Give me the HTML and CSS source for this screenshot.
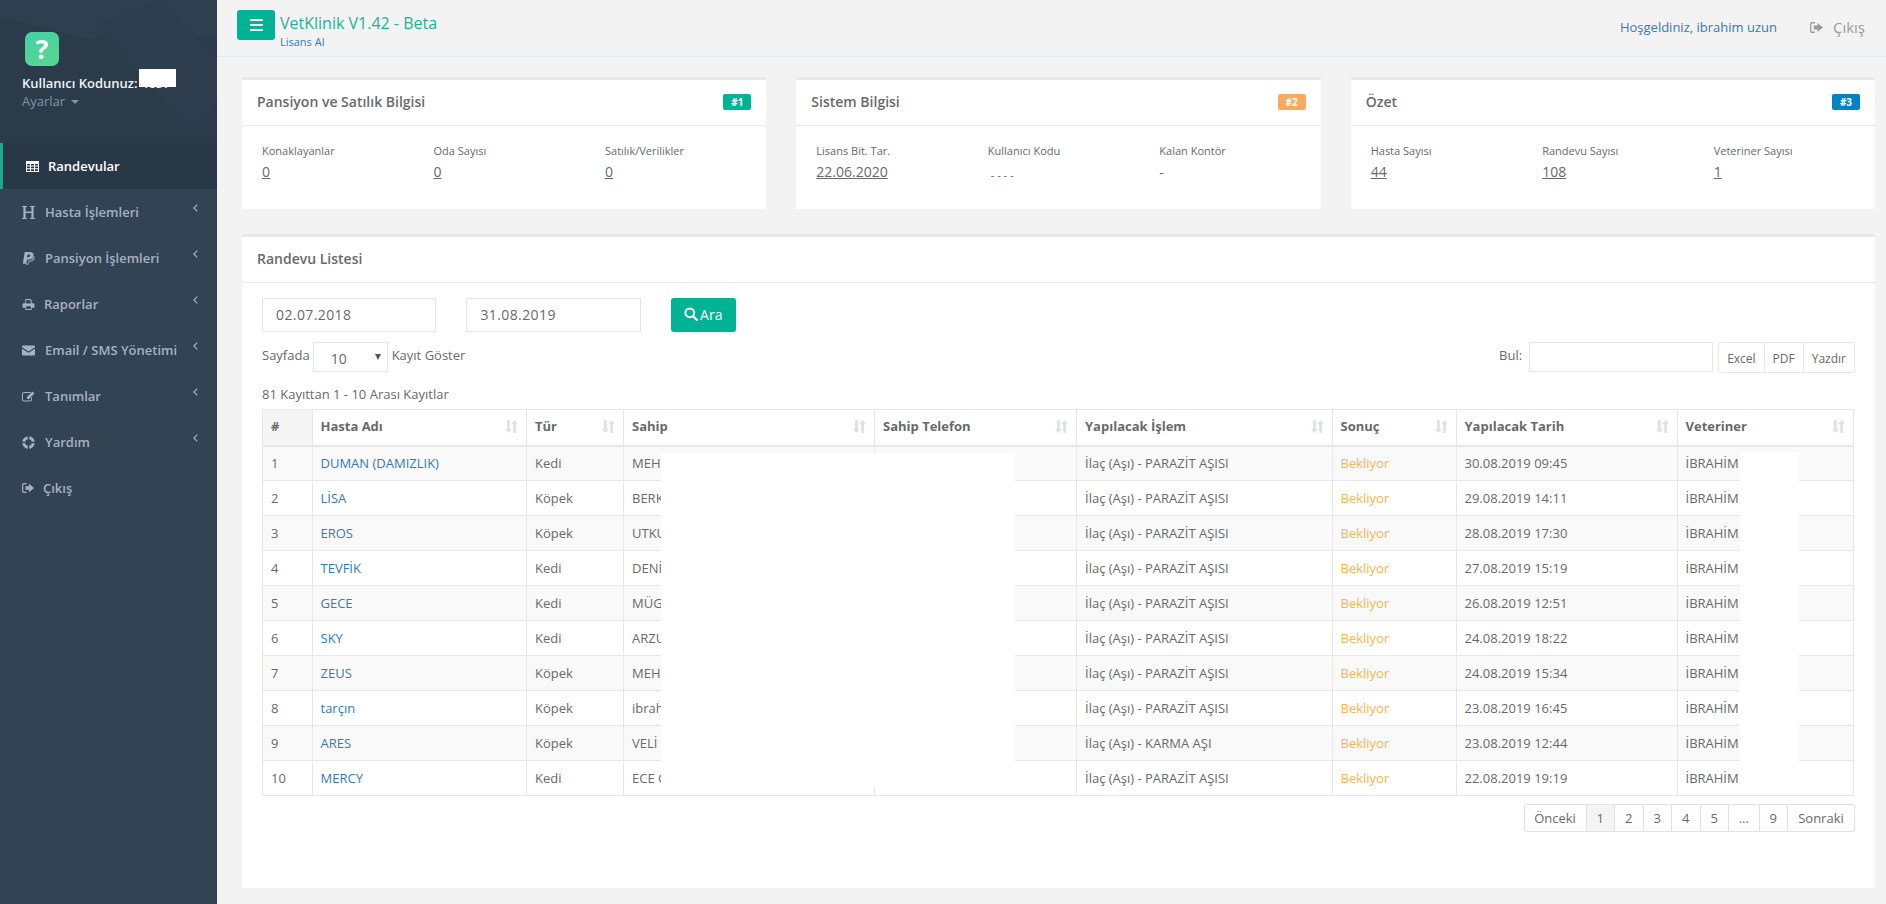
FILE: index.html
```html
<!DOCTYPE html>
<html lang="tr">
<head>
<meta charset="UTF-8" />
<meta name="viewport" content="width=device-width, initial-scale=1" />
<title>VetKlinik - Randevular</title>
<link rel="stylesheet" href="styles.css">
</head>
<body>

<svg class="icon-defs" width="0" height="0">
  <symbol id="i-table" viewBox="0 0 13 11"><path fill-rule="evenodd" d="M0 0h13v11H0zM1 3v1.6h3V3zm4 0v1.6h3V3zm4 0v1.6h3V3zM1 5.6v1.6h3V5.6zm4 0v1.6h3V5.6zm4 0v1.6h3V5.6zM1 8.2V10h3V8.2zm4 0V10h3V8.2zm4 0V10h3V8.2z"/></symbol>
  <symbol id="i-header" viewBox="0 0 13 13"><path d="M0 0h5v1H3.6v4.6h5.8V1H8V0h5v1h-1.4v11H13v1H8v-1h1.4V6.9H3.6V12H5v1H0v-1h1.4V1H0z"/></symbol>
  <symbol id="i-paypal" viewBox="0 0 13 13"><path opacity=".6" d="M10.600 3.200c1.700.6 2.600 1.700 2.300 3.400-.4 2.200-2.200 3.300-4.400 3.300H7.300L6.700 13H3.900l.3-1.800h1.400l.6-3h1.300c1.900 0 3.100-2.200 3.100-5z"/><path fill-rule="evenodd" d="M2.800 0h5.100c2.500 0 3.900 1.200 3.500 3.400-.4 2.700-2.400 4-5 4H5.100L4.200 11.700H.8zM5.500 2.400 4.900 5.200h1.200c1.200 0 2-.6 2.200-1.600.1-.8-.4-1.200-1.300-1.200z"/></symbol>
  <symbol id="i-print" viewBox="0 0 13 12"><path fill-rule="evenodd" d="M3 0h5.500L10 1.500V4.500h1.500A1.500 1.500 0 0 1 13 6v3.500h-3V12H3V9.500H0V6a1.500 1.500 0 0 1 1.500-1.500H3zm1 1v4h5V2.200H8V1zm0 7v3h5V8z"/></symbol>
  <symbol id="i-mail" viewBox="0 0 13 10"><path d="M0 1.200A1.200 1.200 0 0 1 1.200 0h10.600A1.200 1.200 0 0 1 13 1.200v.6L6.500 6 0 1.800z"/><path d="M0 3.200 6.500 7.300 13 3.200v5.600A1.200 1.200 0 0 1 11.800 10H1.200A1.200 1.200 0 0 1 0 8.800z"/></symbol>
  <symbol id="i-edit" viewBox="0 0 13 11"><path d="M2 1h6.500v1H2a1 1 0 0 0-1 1v5.500a1 1 0 0 0 1 1h6a1 1 0 0 0 1-1V6.500h1v2A2 2 0 0 1 8 10.500H2a2 2 0 0 1-2-2V3a2 2 0 0 1 2-2z"/><path d="M10.500.5 12.500 2.500 7 8H5V6z"/></symbol>
  <symbol id="i-ring" viewBox="0 0 13 13">
    <circle cx="6.500" cy="6.500" r="4.800" fill="none" stroke="currentColor" stroke-width="3"/>
    <path d="M6.500 0v3.400M6.500 9.600V13M0 6.500h3.400M9.600 6.500H13" stroke="#324354" stroke-width="1.500"/>
  </symbol>
  <symbol id="i-exit" viewBox="0 0 12 10"><path d="M1.800 0H4.500v1.200H2a.8.800 0 0 0-.8.800v6a.8.800 0 0 0 .8.800h2.500V10H1.800A1.800 1.800 0 0 1 0 8.200V1.800A1.800 1.800 0 0 1 1.800 0z"/><path d="M3.500 3.200H7V.8L12 5 7 9.200V6.800H3.500z"/></symbol>
  <symbol id="i-sort" viewBox="0 0 13 13"><path d="M2 0h2.800v8.800h2L3.400 13 0 8.800h2z"/><path d="M9.600 0 13 4.200h-2V13H8.200V4.200h-2z"/></symbol>
  <symbol id="i-left" viewBox="0 0 5 8"><path d="M4.300.6.900 4l3.400 3.400" fill="none" stroke="currentColor" stroke-width="1.200"/></symbol>
</svg>

<div class="layout">

  <aside class="sidebar">
    <div class="profile">
      <svg class="profile-bg" viewBox="0 0 217 143" preserveAspectRatio="none">
        <polygon points="0,0 217,0 217,40 130,18 90,40 0,16" fill="#2e3f50"/>
        <polygon points="95,25 160,0 217,60 217,100 193,133" fill="#2d3d4d"/>
      </svg>
      <div class="logo">?</div>
      <div class="user-name">Kullanıcı Kodunuz: <span class="user-code">4657</span><i class="hide-code"></i></div>
      <div class="user-menu">Ayarlar <i class="caret"></i></div>
    </div>
    <ul class="nav">
      <li class="active"><svg class="ic w13 h11"><use href="#i-table"/></svg>Randevular</li>
      <li><svg class="ic w13 h13"><use href="#i-header"/></svg>Hasta İşlemleri<svg class="chev"><use href="#i-left"/></svg></li>
      <li><svg class="ic w13 h13"><use href="#i-paypal"/></svg>Pansiyon İşlemleri<svg class="chev"><use href="#i-left"/></svg></li>
      <li class="tight"><svg class="ic w13 h11"><use href="#i-print"/></svg>Raporlar<svg class="chev"><use href="#i-left"/></svg></li>
      <li><svg class="ic w13 h11"><use href="#i-mail"/></svg>Email / SMS Yönetimi<svg class="chev"><use href="#i-left"/></svg></li>
      <li><svg class="ic w13 h11"><use href="#i-edit"/></svg>Tanımlar<svg class="chev"><use href="#i-left"/></svg></li>
      <li><svg class="ic w13 h13"><use href="#i-ring"/></svg>Yardım<svg class="chev"><use href="#i-left"/></svg></li>
      <li class="tight"><svg class="ic w12 h10"><use href="#i-exit"/></svg>Çıkış</li>
    </ul>
  </aside>

  <main class="main">
    <header class="topbar">
      <button class="menu-btn" type="button"><span></span><span></span><span></span></button>
      <div class="brand">
        <div class="brand-title">VetKlinik V1.42 - Beta</div>
        <div class="brand-sub">Lisans Al</div>
      </div>
      <a class="welcome">Hoşgeldiniz, ibrahim uzun</a>
      <a class="logout"><svg class="ic w13 h11"><use href="#i-exit"/></svg>Çıkış</a>
    </header>

    <div class="content">
      <div class="summary">
        <section class="box">
          <div class="box-title"><h5>Pansiyon ve Satılık Bilgisi</h5><span class="badge green">#1</span></div>
          <div class="stats">
            <div><small>Konaklayanlar</small><a class="stat">0</a></div>
            <div><small>Oda Sayısı</small><a class="stat">0</a></div>
            <div><small>Satılık/Verilikler</small><a class="stat">0</a></div>
          </div>
        </section>
        <section class="box">
          <div class="box-title"><h5>Sistem Bilgisi</h5><span class="badge orange">#2</span></div>
          <div class="stats">
            <div><small>Lisans Bit. Tar.</small><a class="stat">22.06.2020</a></div>
            <div><small>Kullanıcı Kodu</small><span class="stat-cut">- - - -</span></div>
            <div><small>Kalan Kontör</small><span class="stat plain">-</span></div>
          </div>
        </section>
        <section class="box">
          <div class="box-title"><h5>Özet</h5><span class="badge blue">#3</span></div>
          <div class="stats">
            <div><small>Hasta Sayısı</small><a class="stat">44</a></div>
            <div><small>Randevu Sayısı</small><a class="stat">108</a></div>
            <div><small>Veteriner Sayısı</small><a class="stat">1</a></div>
          </div>
        </section>
      </div>

      <section class="box list-box">
        <div class="box-title"><h5>Randevu Listesi</h5></div>
        <div class="list-body">
          <div class="date-row">
            <input class="date-input" type="text" value="02.07.2018" readonly>
            <input class="date-input" type="text" value="31.08.2019" readonly>
            <button class="search-btn" type="button">
              <svg class="search-ic" viewBox="0 0 14 14"><circle cx="5.800" cy="5.800" r="4.400" fill="none" stroke="#fff" stroke-width="2"/><path d="M9 9l4 4" stroke="#fff" stroke-width="2.400" stroke-linecap="round"/></svg>Ara
            </button>
          </div>

          <div class="tools-row">
            <label>Sayfada</label>
            <div class="page-size">10</div>
            <label>Kayıt Göster</label>
            <label class="find-label">Bul:</label>
            <input class="find-input" type="text">
            <div class="export">
              <span>Excel</span><span>PDF</span><span>Yazdır</span>
            </div>
          </div>

          <div class="info">81 Kayıttan 1 - 10 Arası Kayıtlar</div>

          <div class="table-wrap">
            <table class="grid">
              <colgroup>
                <col class="c1"><col class="c2"><col class="c3"><col class="c4"><col class="c5"><col class="c6"><col class="c7"><col class="c8"><col class="c9">
              </colgroup>
              <thead>
                <tr>
                  <th class="num">#</th>
                  <th>Hasta Adı<svg class="sort"><use href="#i-sort"/></svg></th>
                  <th>Tür<svg class="sort"><use href="#i-sort"/></svg></th>
                  <th>Sahip<svg class="sort"><use href="#i-sort"/></svg></th>
                  <th>Sahip Telefon<svg class="sort"><use href="#i-sort"/></svg></th>
                  <th>Yapılacak İşlem<svg class="sort"><use href="#i-sort"/></svg></th>
                  <th>Sonuç<svg class="sort"><use href="#i-sort"/></svg></th>
                  <th>Yapılacak Tarih<svg class="sort"><use href="#i-sort"/></svg></th>
                  <th>Veteriner<svg class="sort"><use href="#i-sort"/></svg></th>
                </tr>
              </thead>
              <tbody>
                <tr><td>1</td><td><a>DUMAN (DAMIZLIK)</a></td><td>Kedi</td><td>MEHMET</td><td></td><td>İlaç (Aşı) - PARAZİT AŞISI</td><td class="wait">Bekliyor</td><td>30.08.2019 09:45</td><td>İBRAHİM UZUN</td></tr>
                <tr><td>2</td><td><a>LİSA</a></td><td>Köpek</td><td>BERKAY</td><td></td><td>İlaç (Aşı) - PARAZİT AŞISI</td><td class="wait">Bekliyor</td><td>29.08.2019 14:11</td><td>İBRAHİM UZUN</td></tr>
                <tr><td>3</td><td><a>EROS</a></td><td>Köpek</td><td>UTKU</td><td></td><td>İlaç (Aşı) - PARAZİT AŞISI</td><td class="wait">Bekliyor</td><td>28.08.2019 17:30</td><td>İBRAHİM UZUN</td></tr>
                <tr><td>4</td><td><a>TEVFİK</a></td><td>Kedi</td><td>DENİZ</td><td></td><td>İlaç (Aşı) - PARAZİT AŞISI</td><td class="wait">Bekliyor</td><td>27.08.2019 15:19</td><td>İBRAHİM UZUN</td></tr>
                <tr><td>5</td><td><a>GECE</a></td><td>Kedi</td><td>MÜGE</td><td></td><td>İlaç (Aşı) - PARAZİT AŞISI</td><td class="wait">Bekliyor</td><td>26.08.2019 12:51</td><td>İBRAHİM UZUN</td></tr>
                <tr><td>6</td><td><a>SKY</a></td><td>Kedi</td><td>ARZU</td><td></td><td>İlaç (Aşı) - PARAZİT AŞISI</td><td class="wait">Bekliyor</td><td>24.08.2019 18:22</td><td>İBRAHİM UZUN</td></tr>
                <tr><td>7</td><td><a>ZEUS</a></td><td>Köpek</td><td>MEHMET</td><td></td><td>İlaç (Aşı) - PARAZİT AŞISI</td><td class="wait">Bekliyor</td><td>24.08.2019 15:34</td><td>İBRAHİM UZUN</td></tr>
                <tr><td>8</td><td><a>tarçın</a></td><td>Köpek</td><td>ibrahim</td><td></td><td>İlaç (Aşı) - PARAZİT AŞISI</td><td class="wait">Bekliyor</td><td>23.08.2019 16:45</td><td>İBRAHİM UZUN</td></tr>
                <tr><td>9</td><td><a>ARES</a></td><td>Köpek</td><td>VELİ</td><td></td><td>İlaç (Aşı) - KARMA AŞI</td><td class="wait">Bekliyor</td><td>23.08.2019 12:44</td><td>İBRAHİM UZUN</td></tr>
                <tr><td>10</td><td><a>MERCY</a></td><td>Kedi</td><td>ECE GÜL</td><td></td><td>İlaç (Aşı) - PARAZİT AŞISI</td><td class="wait">Bekliyor</td><td>22.08.2019 19:19</td><td>İBRAHİM UZUN</td></tr>
              </tbody>
            </table>
            <!-- blanked out names on the original -->
            <div class="blank blank-owner"></div>
            <div class="blank blank-vet"></div>
          </div>

          <div class="pager">
            <a class="p-prev">Önceki</a><a class="p-num current">1</a><a class="p-num">2</a><a class="p-num">3</a><a class="p-num">4</a><a class="p-num">5</a><a class="p-dots">...</a><a class="p-num">9</a><a class="p-next">Sonraki</a>
          </div>
        </div>
      </section>
    </div>
  </main>

</div>

</body>
</html>
```

FILE: styles.css
```css
html, body {
  margin: 0; padding: 0;
  height: 904px;
  overflow: hidden;
  font-family: "Open Sans", "Liberation Sans", sans-serif;
  font-size: 13px;
  color: #676a6c;
  background: #f3f3f4;
}
.icon-defs { position: absolute; }
.layout {
  display: flex;
  height: 904px;
}

/* sidebar */
.sidebar {
  width: 217px;
  flex: none;
  background: #324354;
}
.profile {
  position: relative;
  height: 143px;
  box-sizing: border-box;
  padding: 32px 0 0 22px;
  background: #2b3b4a;
  overflow: hidden;
}
.profile-bg {
  position: absolute;
  top: 0; left: 0;
  width: 217px;
  height: 143px;
}
.logo, .user-name, .user-menu { position: relative; }
.logo {
  width: 34px;
  height: 34px;
  margin-left: 3px;
  border-radius: 7px;
  background: linear-gradient(160deg, #42d1a4, #5bd68f);
  color: #fff;
  font-size: 27px;
  font-weight: 700;
  line-height: 34px;
  text-align: center;
}
.user-name {
  margin-top: 8px;
  color: #f1f3f5;
  font-weight: 600;
  line-height: 18px;
}
.hide-code {
  position: absolute;
  left: 117px; top: -5px;
  width: 37px;
  height: 18px;
  background: #fff;
}
.user-menu {
  margin-top: 0;
  color: #8095a8;
  line-height: 18px;
}
.caret {
  display: inline-block;
  margin-left: 3px;
  border-top: 4px solid #8095a8;
  border-left: 4px solid transparent;
  border-right: 4px solid transparent;
  vertical-align: 2px;
}
.nav {
  list-style: none;
  margin: 0; padding: 0;
}
.nav li {
  position: relative;
  display: flex;
  align-items: center;
  height: 46px;
  padding-left: 22px;
  color: #a7b1c2;
  font-weight: 600;
}
.nav li.active {
  padding-left: 23px;
  border-left: 3px solid #19aa8d;
  background: #293846;
  color: #fff;
}
.nav li.tight .ic { margin-right: 9px; }
.nav li.active .ic { margin-right: 9px; }
.ic {
  flex: none;
  fill: currentColor;
  color: inherit;
  margin-right: 10px;
}
.w13 { width: 13px; }
.w12 { width: 12px; }
.h13 { height: 13px; }
.h11 { height: 11px; }
.h10 { height: 10px; }
.chev {
  position: absolute;
  right: 19px; top: 15px;
  width: 5px;
  height: 8px;
  color: #a7b1c2;
}

/* top bar */
.main {
  flex: 1;
  min-width: 0;
}
.topbar {
  display: flex;
  align-items: flex-start;
  height: 56px;
  padding-left: 20px;
  border-bottom: 1px solid #e7eaec;
}
.menu-btn {
  display: flex;
  flex-direction: column;
  justify-content: center;
  align-items: center;
  gap: 3px;
  width: 38px;
  height: 30px;
  margin-top: 10px;
  padding: 0;
  border: 0;
  border-radius: 3px;
  background: #00b394;
}
.menu-btn span {
  display: block;
  width: 13px;
  height: 2px;
  background: #fff;
}
.brand { margin: 13px 0 0 5px; }
.brand-title {
  color: #1ab394;
  font-size: 16px;
  line-height: 21px;
}
.brand-sub {
  margin-top: 1px;
  color: #337ab7;
  font-size: 11px;
  line-height: 14px;
}
.welcome {
  margin: 18px 0 0 auto;
  color: #337ab7;
  line-height: 18px;
}
.logout {
  display: flex;
  align-items: center;
  margin: 17px 21px 0 33px;
  color: #999c9e;
  font-size: 15px;
  line-height: 20px;
}

/* content */
.content { padding: 20px 11px 0 25px; }
.summary {
  display: grid;
  grid-template-columns: repeat(3, minmax(0, 1fr));
  gap: 30px;
}
.box {
  background: #fff;
  border-top: 3px solid #e7eaec;
}
.box-title {
  display: flex;
  justify-content: space-between;
  align-items: center;
  height: 46px;
  box-sizing: border-box;
  padding: 0 15px 2px;
  border-bottom: 1px solid #e7eaec;
}
.box-title h5 {
  margin: 0;
  font-size: 14px;
  font-weight: 600;
}
.badge {
  width: 28px;
  height: 16px;
  border-radius: 2px;
  color: #fff;
  font-size: 10px;
  font-weight: 700;
  line-height: 16px;
  text-align: center;
}
.green { background: #00b394; }
.orange { background: #ffa95e; }
.blue { background: #0083c4; }
.stats {
  display: grid;
  grid-template-columns: repeat(3, 171.500px);
  height: 83px;
  box-sizing: border-box;
  padding: 17px 0 0 20px;
}
.stats small {
  display: block;
  font-size: 11px;
  line-height: 16px;
}
.stat {
  display: inline-block;
  margin-top: 4px;
  font-size: 14px;
  font-weight: 500;
  line-height: 18px;
  text-decoration: underline;
  color: #676a6c;
}
.stat.plain {
  margin-top: 5px;
  text-decoration: none;
}
.stat-cut {
  display: block;
  margin-top: 7px;
  padding-left: 3px;
  font-size: 11px;
  line-height: 18px;
}

/* appointment list */
.list-box {
  height: 651px;
  margin-top: 25px;
}
.list-body { padding: 15px 20px 0 20px; }
.date-row {
  display: flex;
  height: 34px;
  margin-bottom: 10px;
}
.date-input {
  width: 174.400px;
  height: 34px;
  box-sizing: border-box;
  margin-right: 30px;
  padding: 0 13px 2px;
  border: 1px solid #e5e6e7;
  outline: 0;
  color: #676a6c;
  font: 14px "Open Sans", sans-serif;
  letter-spacing: .4px;
}
.search-btn {
  display: flex;
  align-items: center;
  justify-content: center;
  gap: 2px;
  width: 65px;
  height: 34px;
  padding: 0 0 2px;
  border: 0;
  border-radius: 3px;
  background: #00b394;
  color: #fff;
  font: 14px "Open Sans", sans-serif;
}
.search-ic { width: 14px; height: 14px; }
.tools-row {
  display: flex;
  align-items: flex-start;
  height: 30px;
  line-height: 26px;
}
.page-size {
  position: relative;
  width: 75px;
  height: 30px;
  box-sizing: border-box;
  margin: 0 4px 0 3px;
  padding: 3px 0 0 17px;
  border: 1px solid #e5e6e7;
  font-size: 14px;
}
.page-size:after {
  content: "";
  position: absolute;
  right: 6px; top: 11px;
  border-top: 6px solid #555;
  border-left: 3px solid transparent;
  border-right: 3px solid transparent;
}
.find-label { margin-left: auto; }
.find-input {
  width: 184px;
  height: 30px;
  box-sizing: border-box;
  margin: 0 5px 0 7px;
  border: 1px solid #e5e6e7;
  outline: 0;
}
.export {
  display: flex;
  height: 31px;
  box-sizing: border-box;
  border: 1px solid #e7e7e7;
  border-radius: 3px;
  font-size: 12px;
  line-height: 31px;
}
.export span {
  padding: 0 8px;
  border-left: 1px solid #e7e7e7;
}
.export span:first-child { border-left: 0; }
.info {
  margin: 13px 0 6px;
  line-height: 18px;
}
.table-wrap { position: relative; }
.grid {
  width: 1591px;
  table-layout: fixed;
  border-collapse: collapse;
}
.c1 { width: 49.500px; }
.c2 { width: 214.500px; }
.c3 { width: 97px; }
.c4 { width: 251px; }
.c5 { width: 202px; }
.c6 { width: 255.500px; }
.c7 { width: 124px; }
.c8 { width: 221px; }
.c9 { width: 176px; }
.grid th, .grid td {
  position: relative;
  box-sizing: border-box;
  padding: 0 8px;
  border: 1px solid #e7e7e7;
  text-align: left;
  white-space: nowrap;
}
.grid th {
  height: 36px;
  padding-bottom: 2px;
  border-bottom-width: 2px;
  font-weight: 700;
}
.grid th.num { background: #f5f5f6; }
.grid td { height: 35px; }
.grid tbody tr:nth-child(odd) { background: #f9f9f9; }
.grid td a { color: #337ab7; }
.wait { color: #fbb44e; }
.sort {
  position: absolute;
  right: 8px; top: 10px;
  width: 13px;
  height: 13px;
  fill: #dfe1e3;
}
.blank {
  position: absolute;
  background: #fff;
}
.blank-owner {
  left: 399px; top: 44px;
  width: 354px;
  height: 333px;
}
.blank-vet {
  left: 1478px; top: 43px;
  width: 59px;
  height: 338px;
}
.pager {
  display: flex;
  justify-content: flex-end;
  margin: 8px 0 0;
}
.pager a {
  height: 28px;
  box-sizing: border-box;
  border: 1px solid #e2e2e2;
  border-left: 0;
  line-height: 26px;
  text-align: center;
}
.p-prev {
  width: 63px;
  border-left: 1px solid #e2e2e2 !important;
  border-radius: 3px 0 0 3px;
}
.p-num { width: 28.500px; }
.p-num.current { background: #f4f4f4; }
.p-dots { width: 30.500px; }
.p-next {
  width: 67px;
  border-radius: 0 3px 3px 0;
}
```
